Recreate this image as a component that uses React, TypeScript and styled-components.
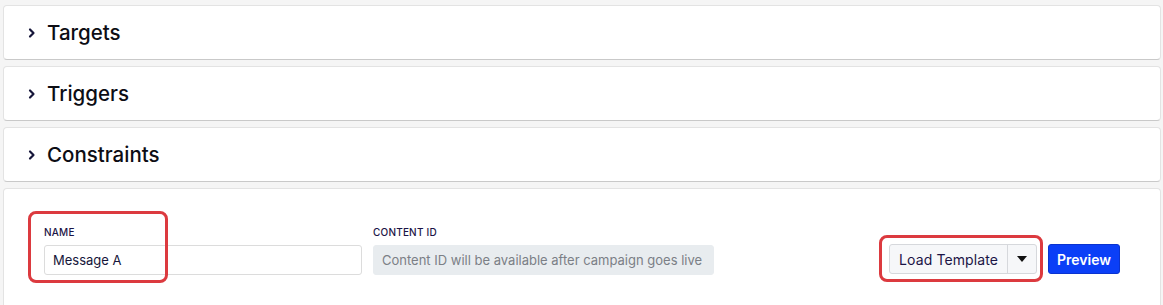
import React from "react";
import styled, { createGlobalStyle } from "styled-components";

const Global = createGlobalStyle`
  html, body { margin: 0; padding: 0; background: #f5f5f5; }
  body { font-family: Inter, "Noto Sans", sans-serif; color: #16163a; }
`;

const Page = styled.div`
  display: flex;
  flex-direction: column;
  gap: 6px;
  padding: 5px 2px 0 3px;
  height: 305px;
  box-sizing: border-box;
  overflow: hidden;
`;

const Panel = styled.div`
  background: #fff;
  border: 1px solid #e3e3e3;
  border-bottom-color: #c9c9c9;
  border-radius: 4px;
  box-sizing: border-box;
  flex-shrink: 0;
`;

const Header = styled.div`
  display: flex;
  align-items: center;
  height: 53px;
  padding-left: 24px;
  gap: 11px;
  font-size: 20.5px;
  font-weight: 450;
  color: #0d0d14;
`;

const Chevron = () => (
  <svg width="8" height="12" viewBox="0 0 8 12">
    <path d="M2 2.5l3.5 3.5-3.5 3.5" fill="none" stroke="#16163a" strokeWidth="2.2" strokeLinecap="round" strokeLinejoin="round" />
  </svg>
);

const Body = styled(Panel)`
  height: 160px;
  display: flex;
  align-items: flex-start;
  padding: 37px 40px 0 40px;
`;

const Field = styled.div<{ $w: number }>`
  position: relative;
  display: flex;
  flex-direction: column;
  gap: 7px;
  width: ${(p) => p.$w}px;
  margin-right: 11px;
`;

const Label = styled.div`
  font-size: 10px;
  font-weight: 500;
  letter-spacing: 0.2px;
  color: #1b1446;
  text-transform: uppercase;
`;

const Input = styled.div<{ $disabled?: boolean }>`
  height: 30px;
  box-sizing: border-box;
  display: flex;
  align-items: center;
  padding: 0 8px;
  font-size: 13px;
  border-radius: 3px;
  border: 1px solid ${(p) => (p.$disabled ? "#e8ecef" : "#dcdcdc")};
  background: ${(p) => (p.$disabled ? "#e8ecef" : "#fff")};
  color: ${(p) => (p.$disabled ? "#7b7f86" : "#16163a")};
`;

const Highlight = styled.div<{ $l: number; $t: number; $w: number; $h: number }>`
  position: absolute;
  left: ${(p) => p.$l}px;
  top: ${(p) => p.$t}px;
  width: ${(p) => p.$w}px;
  height: ${(p) => p.$h}px;
  border: 3px solid #dc3a3f;
  border-radius: 8px;
  box-sizing: border-box;
  pointer-events: none;
`;

const Spacer = styled.div`
  flex: 1;
`;

const Actions = styled.div`
  position: relative;
  display: flex;
  align-items: center;
  gap: 11px;
  margin-top: 18px;
`;

const Split = styled.div`
  display: flex;
  height: 30px;
  border: 1px solid #d6d8dc;
  border-radius: 3px;
  background: #f6f7f9;
  box-sizing: border-box;
`;

const SplitMain = styled.div`
  display: flex;
  align-items: center;
  padding: 0 9px;
  font-size: 14px;
  letter-spacing: 0.1px;
  color: #1b1446;
  border-right: 1px solid #d6d8dc;
`;

const SplitCaret = styled.div`
  width: 28px;
  display: flex;
  align-items: center;
  justify-content: center;
`;

const Primary = styled.div`
  height: 30px;
  box-sizing: border-box;
  display: flex;
  align-items: center;
  padding: 0 8px;
  background: #0b3ff7;
  border: 1px solid #0a33d0;
  border-radius: 3px;
  color: #fff;
  font-size: 14px;
  font-weight: 600;
`;

export default function App() {
  return (
    <>
      <Global />
      <Page>
        {["Targets", "Triggers", "Constraints"].map((t) => (
          <Panel key={t}>
            <Header>
              <Chevron />
              {t}
            </Header>
          </Panel>
        ))}
        <Body>
          <Field $w={318}>
            <Highlight $l={-16} $t={-15} $w={140} $h={72} />
            <Label>Name</Label>
            <Input>Message A</Input>
          </Field>
          <Field $w={341}>
            <Label>Content ID</Label>
            <Input $disabled>Content ID will be available after campaign goes live</Input>
          </Field>
          <Spacer />
          <Actions>
            <Highlight $l={-10} $t={-9} $w={164} $h={47} />
            <Split>
              <SplitMain>Load Template</SplitMain>
              <SplitCaret>
                <svg width="10" height="6" viewBox="0 0 10 6">
                  <path d="M0 0h10L5 6z" fill="#111" />
                </svg>
              </SplitCaret>
            </Split>
            <Primary>Preview</Primary>
          </Actions>
        </Body>
      </Page>
    </>
  );
}
